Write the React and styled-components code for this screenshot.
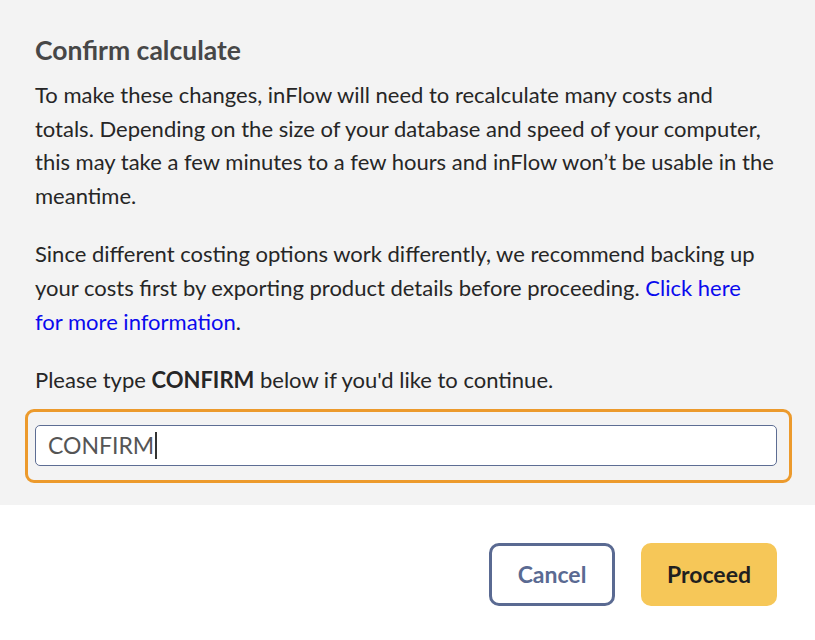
import React from "react";
import styled, { createGlobalStyle } from "styled-components";

const GlobalStyle = createGlobalStyle`
  html, body {
    margin: 0;
    padding: 0;
    background: #ffffff;
  }
  body {
    font-family: Lato, "Open Sans", "Liberation Sans", sans-serif;
    -webkit-font-smoothing: antialiased;
  }
`;

const Dialog = styled.div`
  width: 815px;
  height: 640px;
  display: flex;
  flex-direction: column;
  background: #ffffff;
`;

const Body = styled.div`
  background: #f3f3f3;
  padding: 34px 38px 22px 35px;
`;

const Title = styled.h2`
  margin: 0 0 12px;
  font-size: 26.5px;
  line-height: 32px;
  font-weight: 700;
  color: #474747;
`;

const Paragraph = styled.p`
  margin: 0 0 25px;
  font-size: 22px;
  line-height: 33.6px;
  color: #262626;
  padding-right: ${({ $inset }) => $inset || 0}px;
`;

const Prompt = styled(Paragraph)`
  margin-bottom: 12px;
`;

const Link = styled.a`
  color: #0a0aee;
  text-decoration: none;
`;

const FocusRing = styled.div`
  margin-left: -10px;
  margin-right: -15px;
  padding: 13px 12px 14px 7px;
  border: 3px solid #ec9a2c;
  border-radius: 9px;
`;

const TextField = styled.div`
  display: flex;
  align-items: center;
  box-sizing: border-box;
  height: 41px;
  padding: 0 12px;
  border: 1px solid #5d6d93;
  border-radius: 5px;
  background: #ffffff;
  font-size: 23px;
  color: #555555;
`;

const Caret = styled.span`
  display: inline-block;
  width: 2px;
  height: 27px;
  margin-left: 1px;
  background: #333333;
`;

const Footer = styled.div`
  flex: 1;
  display: flex;
  justify-content: flex-end;
  align-items: flex-start;
  gap: 26px;
  padding: 38px 38px 0 0;
`;

const Button = styled.button`
  box-sizing: border-box;
  height: 63px;
  min-width: ${({ $width }) => $width}px;
  border-radius: 10px;
  font-family: inherit;
  font-size: 23px;
  font-weight: 700;
  cursor: pointer;
  border: 3px solid ${({ $primary }) => ($primary ? "#f6c758" : "#5a6a92")};
  background: ${({ $primary }) => ($primary ? "#f6c758" : "#ffffff")};
  color: ${({ $primary }) => ($primary ? "#1f1f1f" : "#5a6a92")};
`;

export default function App() {
  return (
    <Dialog>
      <GlobalStyle />
      <Body>
        <Title>Confirm calculate</Title>
        <Paragraph>
          To make these changes, inFlow will need to recalculate many costs and
          totals. Depending on the size of your database and speed of your
          computer, this may take a few minutes to a few hours and inFlow won’t
          be usable in the meantime.
        </Paragraph>
        <Paragraph $inset={12}>
          Since different costing options work differently, we recommend
          backing up your costs first by exporting product details before
          proceeding. <Link href="#">Click here for more information</Link>.
        </Paragraph>
        <Prompt>
          Please type <strong>CONFIRM</strong> below if you'd like to continue.
        </Prompt>
        <FocusRing>
          <TextField role="textbox">
            CONFIRM
            <Caret />
          </TextField>
        </FocusRing>
      </Body>
      <Footer>
        <Button $width={126}>Cancel</Button>
        <Button $width={136} $primary>
          Proceed
        </Button>
      </Footer>
    </Dialog>
  );
}
